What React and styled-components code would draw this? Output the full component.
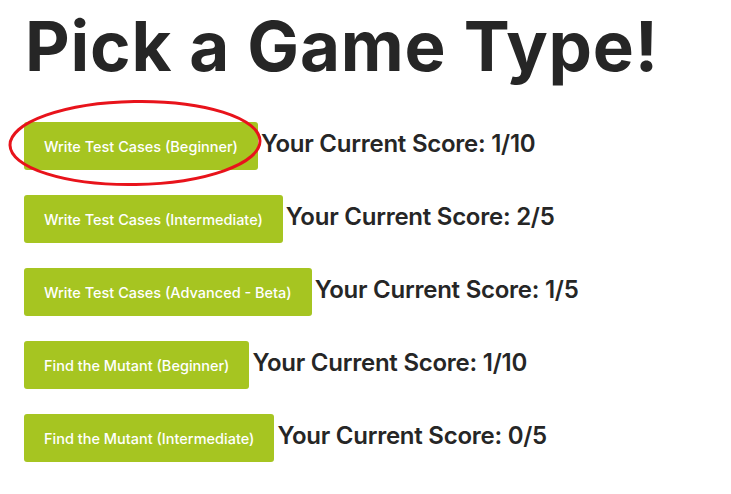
import React from "react";
import styled, { createGlobalStyle } from "styled-components";

const Global = createGlobalStyle`
  html, body { margin: 0; padding: 0; background: #ffffff; }
  body { font-family: "Inter", "Liberation Sans", sans-serif; color: #222222; }
`;

const Page = styled.div`
  position: relative;
  padding: 6px 0 0 24px;
  width: 731px;
  height: 494px;
  box-sizing: border-box;
  overflow: hidden;
`;

const Title = styled.h1`
  margin: 0 0 36px 1px;
  font-size: 69px;
  line-height: 80px;
  font-weight: 700;
  letter-spacing: 0.8px;
  color: #262626;
`;

const List = styled.div`
  display: flex;
  flex-direction: column;
  gap: 25px;
`;

const Row = styled.div`
  display: flex;
  align-items: baseline;
  gap: 3px;
`;

const GameButton = styled.button`
  height: 48px;
  padding: 0 20px;
  border: none;
  border-radius: 3px;
  background: #a6c521;
  color: #ffffff;
  font-family: "Inter", "Liberation Sans", sans-serif;
  font-size: 14.5px;
  font-weight: 500;
  cursor: pointer;
`;

const Score = styled.h3`
  margin: 0;
  font-size: 24px;
  font-weight: 600;
  letter-spacing: -0.25px;
  color: #262626;
`;

const Annotation = styled.svg`
  position: absolute;
  left: 0;
  top: 90px;
  pointer-events: none;
`;

const games = [
  { label: "Write Test Cases (Beginner)", score: "1/10" },
  { label: "Write Test Cases (Intermediate)", score: "2/5" },
  { label: "Write Test Cases (Advanced - Beta)", score: "1/5" },
  { label: "Find the Mutant (Beginner)", score: "1/10" },
  { label: "Find the Mutant (Intermediate)", score: "0/5" },
];

export default function App() {
  return (
    <Page>
      <Global />
      <Title>Pick a Game Type!</Title>
      <List>
        {games.map((g) => (
          <Row key={g.label}>
            <GameButton>{g.label}</GameButton>
            <Score>Your Current Score: {g.score}</Score>
          </Row>
        ))}
      </List>
      <Annotation width="280" height="110" viewBox="0 0 280 110">
        <ellipse
          cx="135"
          cy="53"
          rx="125"
          ry="41.5"
          fill="none"
          stroke="#e8131b"
          strokeWidth="3"
          transform="rotate(-1 135 53)"
        />
      </Annotation>
    </Page>
  );
}
